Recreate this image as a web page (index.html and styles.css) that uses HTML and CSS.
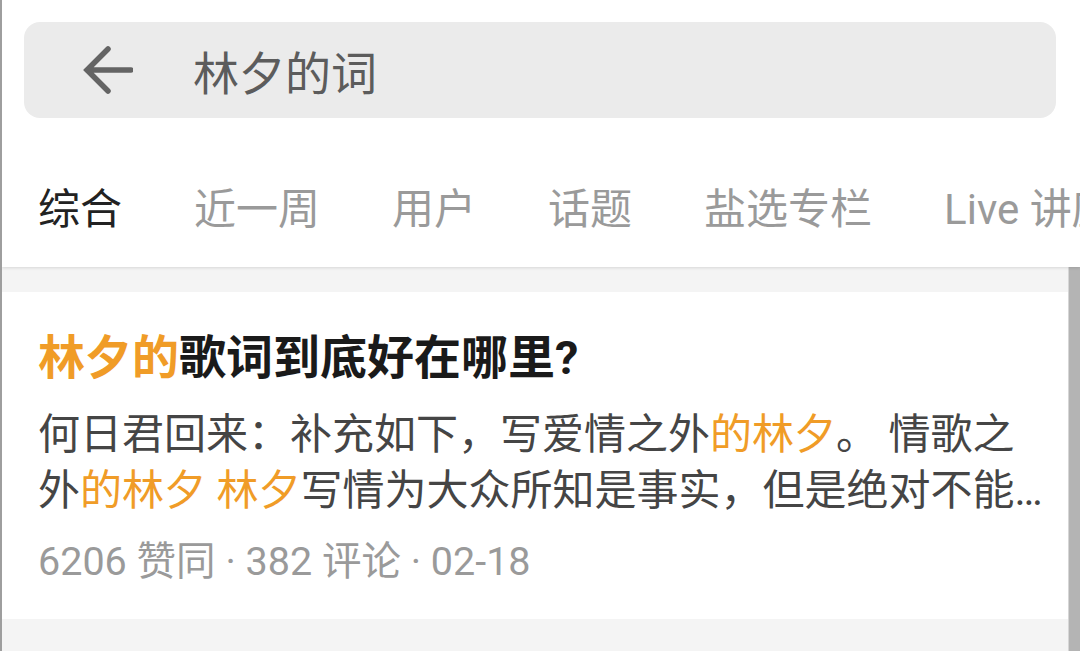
FILE: index.html
```html
<!DOCTYPE html>
<html lang="zh-CN">
<head>
    <meta charset="UTF-8">
    <meta name="viewport" content="width=device-width, initial-scale=1.0">
    <title>林夕的词 - 搜索</title>
    <link rel="stylesheet" href="styles.css">
</head>
<body>
    <header class="top">
        <div class="search">
            <svg class="back" viewBox="0 0 50 50" width="50" height="50">
                <path d="M4 25 H48 M25 4 L4 25 L25 46" fill="none" stroke="#646464" stroke-width="5.5" stroke-linecap="round" stroke-linejoin="miter"/>
            </svg>
            <span class="query">林夕的词</span>
        </div>
        <nav class="tabs">
            <span class="tab active">综合</span>
            <span class="tab">近一周</span>
            <span class="tab">用户</span>
            <span class="tab">话题</span>
            <span class="tab">盐选专栏</span>
            <span class="tab">Live 讲座</span>
        </nav>
    </header>
    <div class="feed">
        <main class="list">
            <article class="card">
                <h2 class="title"><em>林夕的</em>歌词到底好在哪里?</h2>
                <p class="excerpt">何日君回来：补充如下，写爱情之外<em>的林夕</em>。 情歌之外<em>的林夕</em> <em>林夕</em>写情为大众所知是事实，但是绝对不能忽略他写爱情之外的作品。</p>
                <div class="meta">6206 赞同 · 382 评论 · 02-18</div>
            </article>
        </main>
        <div class="scrollbar"></div>
    </div>
</body>
</html>
```

FILE: styles.css
```css
html, body {
    height: 100%;
}
body {
    margin: 0;
    font-family: Roboto, "Noto Sans CJK SC", sans-serif;
    background: #f4f4f4;
    border-left: 2px solid #9e9e9e;
    display: flex;
    flex-direction: column;
    overflow: hidden;
}
em {
    font-style: normal;
    color: #f09c27;
}
.top {
    background: white;
    padding-top: 22px;
    box-shadow: 0 1px 3px rgba(0, 0, 0, 0.12);
    position: relative;
    z-index: 1;
}
.search {
    margin: 0 24px 0 22px;
    height: 96px;
    background: #ebebeb;
    border-radius: 16px;
    display: flex;
    align-items: center;
    padding-left: 59px;
}
.back {
    flex: none;
}
.query {
    margin-left: 60px;
    font-size: 46px;
    color: #5c5c5c;
}
.tabs {
    display: flex;
    gap: 72px;
    padding: 64px 0 29px 36px;
    white-space: nowrap;
    overflow: hidden;
}
.tab {
    font-size: 42px;
    line-height: 56px;
    color: #9a9a9a;
}
.tab.active {
    color: #222;
}
.feed {
    flex: 1;
    display: flex;
}
.list {
    flex: 1;
    padding-top: 25px;
}
.scrollbar {
    width: 11px;
    background: #b4b4b4;
    border-left: 1px solid #d6d6d6;
}
.card {
    background: white;
    padding: 36px 22px 31px 36px;
}
.title {
    margin: 0;
    font-size: 47px;
    line-height: 60px;
    font-weight: bold;
    color: #1a1a1a;
}
.excerpt {
    margin: 19px 0 0;
    font-size: 42px;
    line-height: 56px;
    color: #454545;
    display: -webkit-box;
    -webkit-line-clamp: 2;
    -webkit-box-orient: vertical;
    overflow: hidden;
}
.meta {
    margin-top: 17px;
    font-size: 39.5px;
    line-height: 52px;
    color: #9a9a9a;
}
```
